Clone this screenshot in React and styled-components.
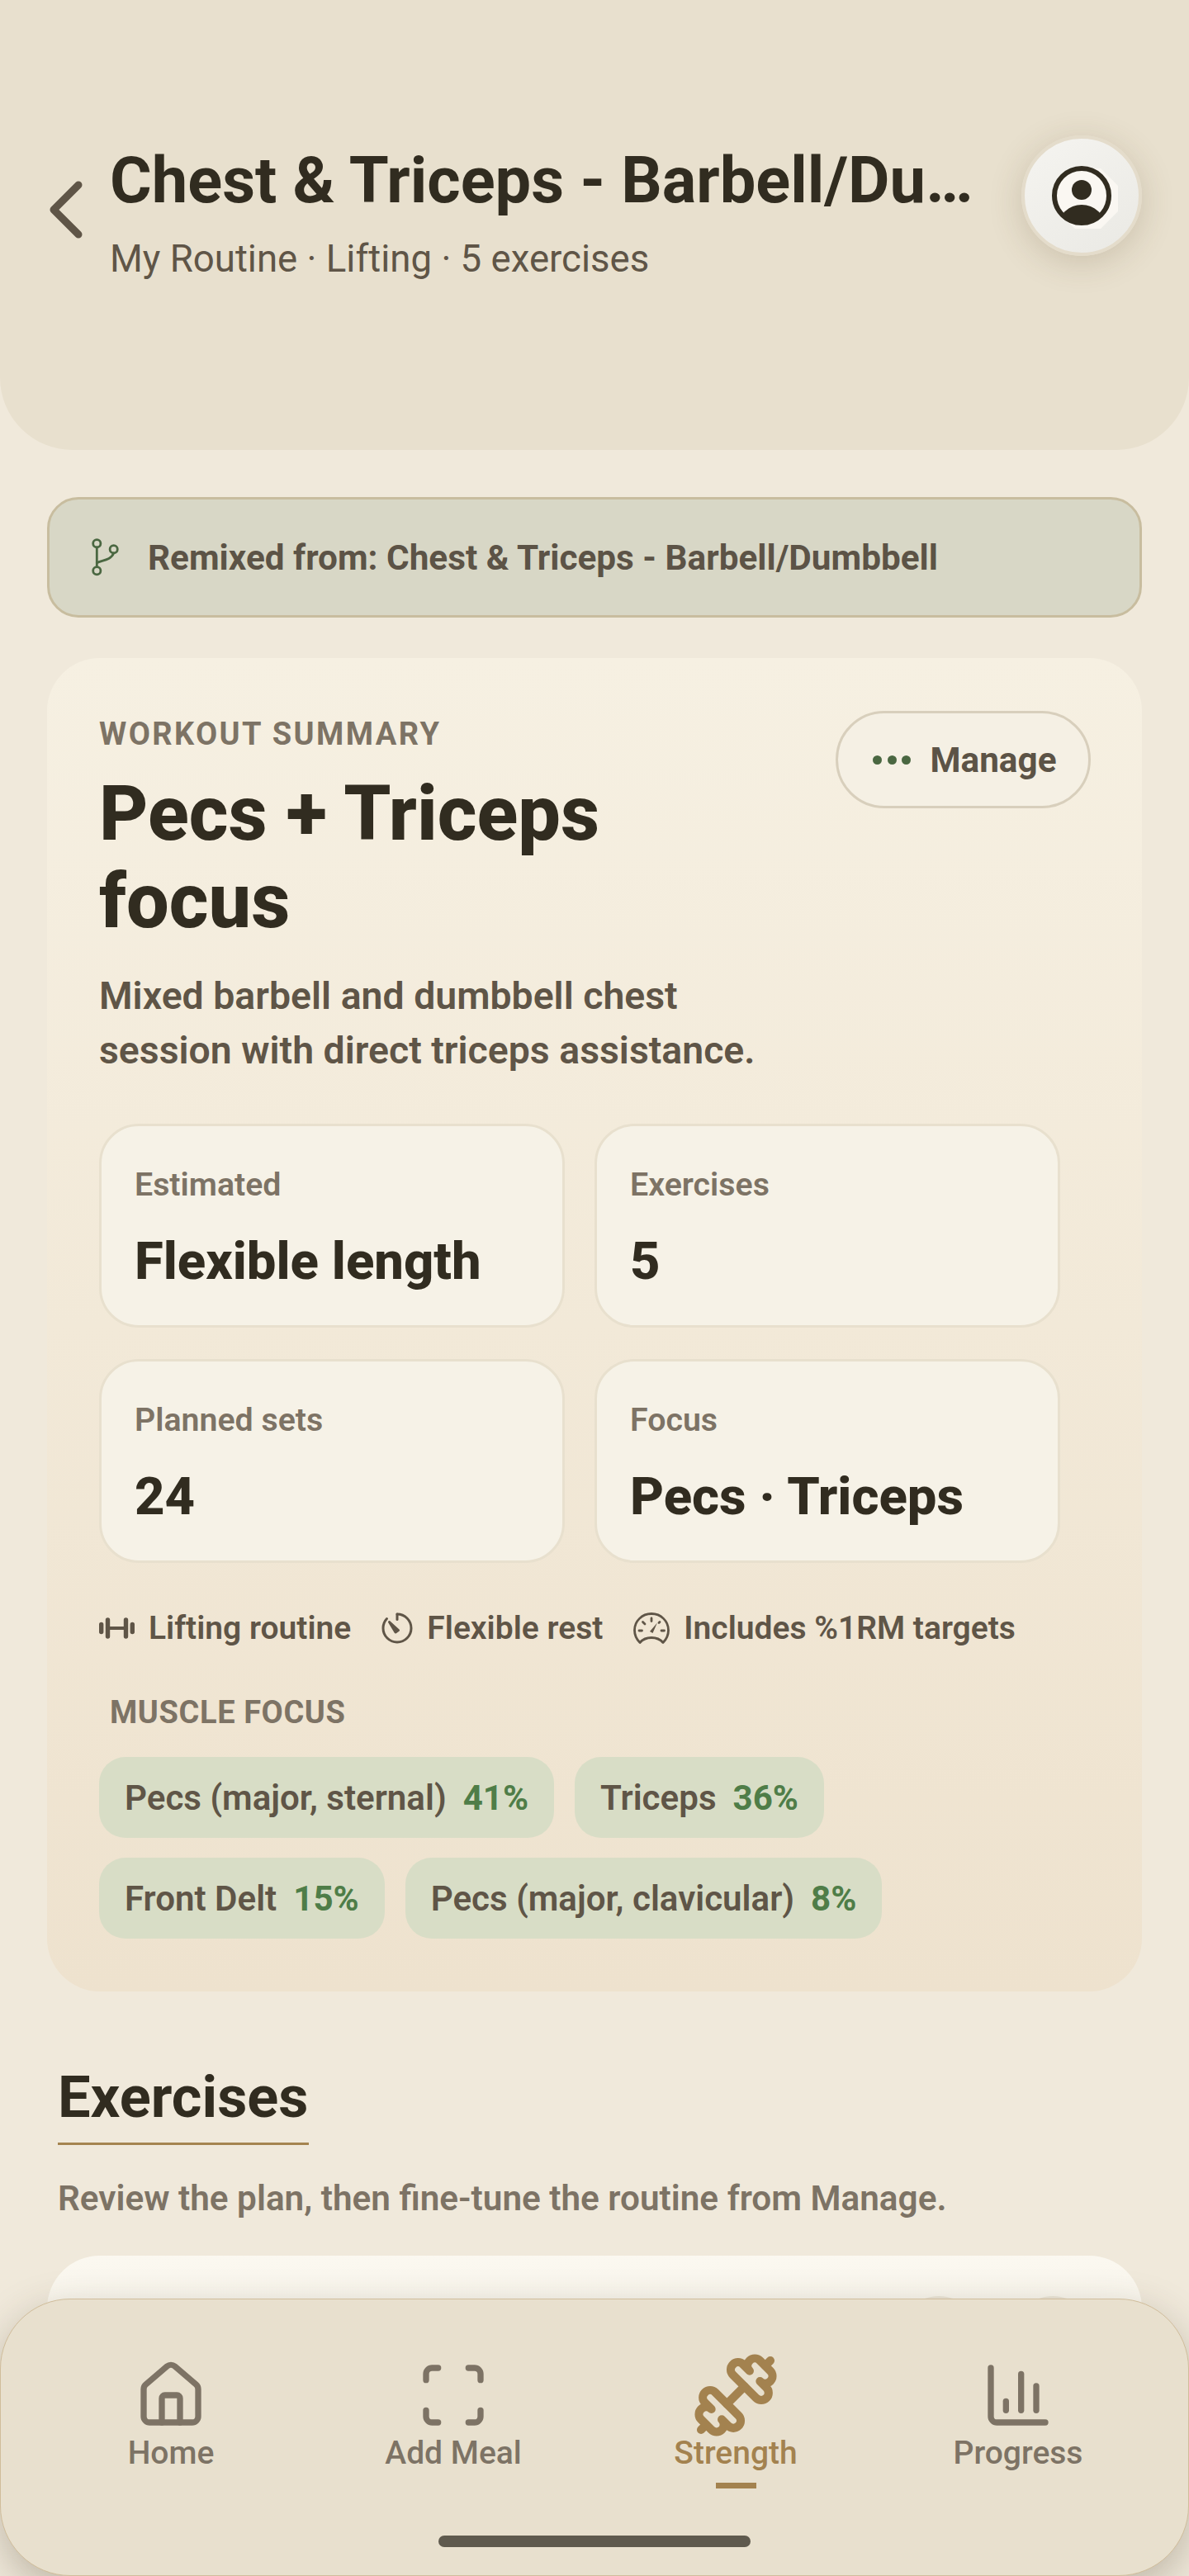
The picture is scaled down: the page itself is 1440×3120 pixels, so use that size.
import styled, { createGlobalStyle } from "styled-components"
import { ChevronLeft, Dumbbell, House, Scan, ChartColumn } from "lucide-react"

const Global = createGlobalStyle`
  html, body { margin: 0; padding: 0; background: #f0e9db; }
  * { box-sizing: border-box; }
  body { font-family: Roboto, "Liberation Sans", sans-serif; }
`

const stats = [
  { label: "Estimated", value: "Flexible length" },
  { label: "Exercises", value: "5" },
  { label: "Planned sets", value: "24" },
  { label: "Focus", value: "Pecs · Triceps" },
]

const muscles = [
  [
    { name: "Pecs (major, sternal)", pct: "41%" },
    { name: "Triceps", pct: "36%" },
  ],
  [
    { name: "Front Delt", pct: "15%" },
    { name: "Pecs (major, clavicular)", pct: "8%" },
  ],
]

const navItems = [
  { label: "Home", Icon: House },
  { label: "Add Meal", Icon: Scan },
  { label: "Strength", Icon: Dumbbell, active: true },
  { label: "Progress", Icon: ChartColumn },
]

const BranchIcon = () => (
  <svg width="33" height="46" viewBox="0 0 33 46" fill="none" stroke="#4a6741" strokeWidth="2.8" strokeLinecap="round">
    <circle cx="6.3" cy="6.3" r="4.6" />
    <circle cx="6.3" cy="39.3" r="4.6" />
    <circle cx="26.7" cy="13.3" r="4.6" />
    <path d="M6.3 11v23.6" />
    <path d="M6.3 29.7C12 26.5 23 27 26.7 18" />
  </svg>
)

const BarbellIcon = () => (
  <svg width="43" height="26" viewBox="0 0 43 26" fill="none" stroke="#5f5547" strokeWidth="5.4" strokeLinecap="round">
    <path d="M2.7 8.500v9M10.500 3v20M32.500 3v20M40.300 8.500v9" />
    <path d="M10 13h23" strokeWidth="4.2" />
  </svg>
)

const TimerIcon = () => (
  <svg width="38" height="38" viewBox="0 0 38 38" fill="none" stroke="#5f5547" strokeWidth="3" strokeLinecap="round" strokeLinejoin="round">
    <path d="M19 2c9.400 0 17 7.600 17 17s-7.600 17-17 17S2 28.400 2 19c0-4.400 1.600-8.400 4.500-11.500" />
    <path d="M19 2v6.500" />
    <path d="M9.500 11.500L20.500 21.500 17 24z" fill="#5f5547" />
  </svg>
)

const GaugeIcon = () => (
  <svg width="44" height="38" viewBox="0 0 44 38" fill="none" stroke="#5f5547" strokeWidth="2.8" strokeLinecap="round" strokeLinejoin="round">
    <path d="M8 36.500C4 32.500 1.500 27 1.500 21.500 1.500 10.500 10.500 1.500 22 1.500s20.500 9 20.500 20c0 5.500-2.500 11-6.500 15-3-3.500-8.500-6-14-6s-11 2.500-14 6z" />
    <path d="M22 7v3.500M11.500 11.500l2.500 2.500M7 22h3.500M34 22h3.500M32 11.500l-1 1" />
    <path d="M29 12.500l-5.500 12.500-3.500-2z" fill="#5f5547" stroke="none" />
  </svg>
)

const AvatarIcon = () => (
  <svg width="108" height="108" viewBox="0 0 108 108" fill="none">
    <polygon points="54,21 77,21 98,42 98,73 77,94 46,94 30,80 30,40" fill="#faf7f2" />
    <circle cx="54" cy="54" r="33" fill="#faf7f2" stroke="#312c20" strokeWidth="6" />
    <circle cx="54" cy="47" r="12" fill="#312c20" />
    <path d="M31 76C37 69 45 65 54 65S71 69 77 76A32 32 0 0 1 31 76z" fill="#312c20" />
  </svg>
)

const App = () => {
  return (
    <Page>
      <Global />
      <Header>
        <BackButton>
          <ChevronLeft size={120} strokeWidth={1.8} />
        </BackButton>
        <HeaderText>
          <Title>Chest &amp; Triceps - Barbell/Dumbbell</Title>
          <Subtitle>My Routine · Lifting · 5 exercises</Subtitle>
        </HeaderText>
        <Avatar>
          <AvatarIcon />
        </Avatar>
      </Header>

      <Content>
        <RemixBanner>
          <BranchIcon />
          <span>Remixed from: Chest &amp; Triceps - Barbell/Dumbbell</span>
        </RemixBanner>

        <SummaryCard>
          <SummaryTop>
            <div>
              <Eyebrow>WORKOUT SUMMARY</Eyebrow>
              <SummaryTitle>Pecs + Triceps focus</SummaryTitle>
            </div>
            <ManageButton>
              <Dots>
                <i />
                <i />
                <i />
              </Dots>
              Manage
            </ManageButton>
          </SummaryTop>
          <SummaryDesc>Mixed barbell and dumbbell chest session with direct triceps assistance.</SummaryDesc>

          <StatGrid>
            {stats.map((s) => (
              <StatBox key={s.label}>
                <StatLabel>{s.label}</StatLabel>
                <StatValue>{s.value}</StatValue>
              </StatBox>
            ))}
          </StatGrid>

          <MetaRow>
            <MetaItem>
              <BarbellIcon />
              Lifting routine
            </MetaItem>
            <MetaItem>
              <TimerIcon />
              Flexible rest
            </MetaItem>
            <MetaItem>
              <GaugeIcon />
              Includes %1RM targets
            </MetaItem>
          </MetaRow>

          <MuscleLabel>MUSCLE FOCUS</MuscleLabel>
          <ChipRows>
            {muscles.map((row, i) => (
              <ChipRow key={i}>
                {row.map((m) => (
                  <Chip key={m.name}>
                    {m.name}
                    <ChipPct>{m.pct}</ChipPct>
                  </Chip>
                ))}
              </ChipRow>
            ))}
          </ChipRows>
        </SummaryCard>

        <SectionHead>
          <SectionTitle>Exercises</SectionTitle>
        </SectionHead>
        <SectionDesc>Review the plan, then fine-tune the routine from Manage.</SectionDesc>
        <ExerciseCard>
          <RoundAction />
          <RoundAction />
        </ExerciseCard>
      </Content>

      <BottomNav>
        <NavRow>
          {navItems.map(({ label, Icon, active }) => (
            <NavItem key={label} $active={active}>
              <NavIcon>
                <Icon size={active ? 106 : 88} strokeWidth={active ? 2.3 : 2} />
              </NavIcon>
              <NavLabel>{label}</NavLabel>
              {active && <NavMark />}
            </NavItem>
          ))}
        </NavRow>
        <HomeBar />
      </BottomNav>
    </Page>
  )
}
export default App

const Page = styled.div`
  position: relative;
  width: 1440px;
  height: 3120px;
  overflow: hidden;
  background: #f0e9db;
`

const Header = styled.header`
  height: 545px;
  background: #e8e0ce;
  border-radius: 0 0 88px 88px;
  padding: 164px 57px 0 20px;
  display: flex;
  align-items: flex-start;
`

const BackButton = styled.div`
  width: 113px;
  height: 120px;
  flex: none;
  margin-top: 30px;
  color: #5f5547;
  svg {
    display: block;
  }
`

const HeaderText = styled.div`
  flex: 1;
  min-width: 0;
  padding-top: 10px;
`

const Title = styled.h1`
  margin: 0;
  width: 1090px;
  font-size: 77.6px;
  line-height: 90px;
  font-weight: 700;
  color: #312c20;
  white-space: nowrap;
  overflow: hidden;
  text-overflow: ellipsis;
`

const Subtitle = styled.div`
  margin-top: 22px;
  font-size: 45.6px;
  line-height: 56px;
  color: #5f5547;
`

const Avatar = styled.div`
  flex: none;
  width: 146px;
  height: 146px;
  border-radius: 50%;
  border: 4px solid #e4dccb;
  background: linear-gradient(145deg, #f5f4f0, #eae9e4);
  box-shadow: 0 8px 40px rgba(90, 70, 40, 0.2);
  display: flex;
  align-items: center;
  justify-content: center;
`

const Content = styled.main`
  padding: 57px 57px 0;
`

const RemixBanner = styled.div`
  height: 146px;
  border-radius: 38px;
  border: 3px solid #c8bd9f;
  background: #d8d7c6;
  padding: 0 51px;
  display: flex;
  align-items: center;
  gap: 35px;
  font-size: 42.3px;
  font-weight: 700;
  color: #5c5346;
`

const SummaryCard = styled.section`
  margin-top: 49px;
  height: 1615px;
  border-radius: 64px;
  background: linear-gradient(180deg, #f6f0e2, #eee2ce);
  padding: 70px 62px 0 63px;
`

const SummaryTop = styled.div`
  display: flex;
  justify-content: space-between;
  align-items: flex-start;
`

const Eyebrow = styled.div`
  font-size: 38px;
  line-height: 44px;
  font-weight: 700;
  letter-spacing: 2.4px;
  color: #7d7365;
`

const SummaryTitle = styled.h2`
  margin: 22px 0 0;
  width: 720px;
  font-size: 91.8px;
  line-height: 106px;
  font-weight: 800;
  color: #312c20;
`

const ManageButton = styled.div`
  height: 118px;
  width: 309px;
  margin-top: -6px;
  border-radius: 59px;
  border: 3px solid #d8cfbc;
  background: #f5f0e4;
  display: flex;
  align-items: center;
  justify-content: center;
  gap: 23px;
  padding-left: 4px;
  font-size: 42.3px;
  font-weight: 700;
  color: #5c5346;
`

const Dots = styled.span`
  display: flex;
  gap: 6.5px;
  i {
    width: 11px;
    height: 11px;
    border-radius: 50%;
    background: #4a6741;
  }
`

const SummaryDesc = styled.p`
  margin: 28px 0 0;
  width: 860px;
  font-size: 46.4px;
  line-height: 66px;
  font-weight: 600;
  color: #5f5547;
`

const StatGrid = styled.div`
  margin-top: 56px;
  display: grid;
  grid-template-columns: 564px 564px;
  grid-auto-rows: 247px;
  gap: 38px 36px;
`

const StatBox = styled.div`
  border-radius: 48px;
  border: 3px solid #e8e0ce;
  background: #f6f2e7;
  padding: 48px 40px 0;
`

const StatLabel = styled.div`
  font-size: 39.3px;
  line-height: 46px;
  font-weight: 600;
  color: #7d7365;
`

const StatValue = styled.div`
  margin-top: 31px;
  font-size: 63.4px;
  line-height: 76px;
  font-weight: 800;
  color: #312c20;
`

const MetaRow = styled.div`
  margin-top: 55px;
  display: flex;
  align-items: center;
  gap: 37px;
`

const MetaItem = styled.div`
  display: flex;
  align-items: center;
  gap: 17px;
  font-size: 39px;
  line-height: 48px;
  font-weight: 600;
  color: #5f5547;
`

const MuscleLabel = styled.div`
  margin: 56px 0 0 13px;
  font-size: 38px;
  line-height: 44px;
  font-weight: 700;
  letter-spacing: 0.6px;
  color: #7d7365;
`

const ChipRows = styled.div`
  margin-top: 32px;
  display: flex;
  flex-direction: column;
  gap: 24px;
`

const ChipRow = styled.div`
  display: flex;
  gap: 25px;
`

const Chip = styled.div`
  height: 98px;
  border-radius: 32px;
  background: #d8ddc6;
  padding: 0 31px;
  display: flex;
  align-items: center;
  gap: 20px;
  font-size: 42.1px;
  font-weight: 600;
  color: #5f5547;
`

const ChipPct = styled.span`
  color: #4f7d48;
  font-weight: 700;
`

const SectionHead = styled.div`
  margin: 83px 0 0 13px;
`

const SectionTitle = styled.h2`
  display: inline-block;
  margin: 0;
  font-size: 70.4px;
  line-height: 90px;
  font-weight: 700;
  color: #312c20;
  border-bottom: 3px solid #a58450;
  padding-bottom: 10px;
`

const SectionDesc = styled.div`
  margin: 39px 0 0 13px;
  font-size: 42.3px;
  line-height: 52px;
  font-weight: 600;
  color: #7d7365;
`

const ExerciseCard = styled.div`
  margin-top: 43px;
  height: 400px;
  border-radius: 64px;
  background: linear-gradient(180deg, #fbf8f0, #f1ece0);
  padding: 49px 58px 0;
  display: flex;
  justify-content: flex-end;
  gap: 38px;
`

const RoundAction = styled.div`
  width: 100px;
  height: 100px;
  border-radius: 50%;
  background: #ece6d9;
`

const BottomNav = styled.nav`
  position: absolute;
  left: 0;
  right: 0;
  bottom: 0;
  height: 336px;
  background: #e8e0ce;
  border: 1px solid #d0bd9b;
  border-radius: 85px;
  box-shadow: 0 16px 50px rgba(60, 50, 30, 0.28);
  padding: 72px 35px 0;
`

const NavRow = styled.div`
  display: grid;
  grid-template-columns: repeat(4, 342px);
`

const NavItem = styled.div`
  display: flex;
  flex-direction: column;
  align-items: center;
  position: relative;
  color: ${({ $active }) => ($active ? "#a3824f" : "#7d7365")};
`

const NavIcon = styled.div`
  height: 88px;
  display: flex;
  align-items: center;
  justify-content: center;
  svg {
    flex: none;
  }
`

const NavLabel = styled.div`
  font-size: 39px;
  line-height: 46px;
  font-weight: 500;
  margin-top: 3px;
`

const NavMark = styled.div`
  position: absolute;
  bottom: -20px;
  width: 49px;
  height: 7px;
  background: #a3824f;
`

const HomeBar = styled.div`
  width: 378px;
  height: 14px;
  margin: 77px auto 0;
  border-radius: 7px;
  background: #5f5a4e;
`
